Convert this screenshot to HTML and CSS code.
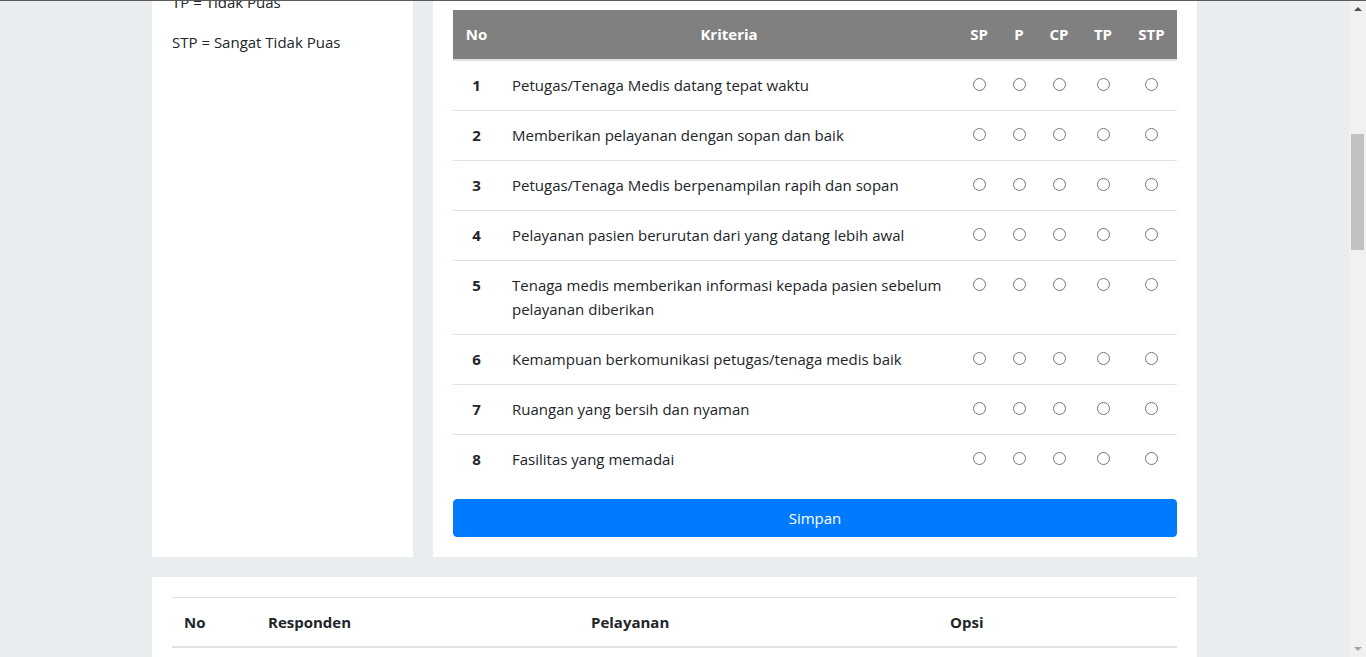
FILE: index.html
```html
<!DOCTYPE html>
<html lang="id">
<head>
<meta charset="utf-8">
<title>Kuesioner Kepuasan Pelayanan</title>
<link rel="stylesheet" href="styles.css">
</head>
<body>
<div class="topline"></div>
<main class="page">
  <div class="row">
    <aside class="card legend">
      <p>SP = Sangat Puas</p>
      <p>P = Puas</p>
      <p>CP = Cukup Puas</p>
      <p>TP = Tidak Puas</p>
      <p>STP = Sangat Tidak Puas</p>
    </aside>
    <section class="card survey">
      <div class="form-head">
        <h4>Kuesioner Kepuasan Pelayanan</h4>
        <p>Silakan pilih salah satu jawaban pada setiap kriteria.</p>
      </div>
      <form>
        <table class="tbl survey-tbl">
          <colgroup>
            <col class="c-no"><col class="c-krit"><col class="c-sp"><col class="c-p"><col class="c-cp"><col class="c-tp"><col class="c-stp">
          </colgroup>
          <thead>
            <tr><th>No</th><th>Kriteria</th><th>SP</th><th>P</th><th>CP</th><th>TP</th><th>STP</th></tr>
          </thead>
          <tbody>
            <tr><td class="no">1</td><td class="krit">Petugas/Tenaga Medis datang tepat waktu</td><td class="opt"><input type="radio" name="q1"></td><td class="opt"><input type="radio" name="q1"></td><td class="opt"><input type="radio" name="q1"></td><td class="opt"><input type="radio" name="q1"></td><td class="opt"><input type="radio" name="q1"></td></tr>
            <tr><td class="no">2</td><td class="krit">Memberikan pelayanan dengan sopan dan baik</td><td class="opt"><input type="radio" name="q2"></td><td class="opt"><input type="radio" name="q2"></td><td class="opt"><input type="radio" name="q2"></td><td class="opt"><input type="radio" name="q2"></td><td class="opt"><input type="radio" name="q2"></td></tr>
            <tr><td class="no">3</td><td class="krit">Petugas/Tenaga Medis berpenampilan rapih dan sopan</td><td class="opt"><input type="radio" name="q3"></td><td class="opt"><input type="radio" name="q3"></td><td class="opt"><input type="radio" name="q3"></td><td class="opt"><input type="radio" name="q3"></td><td class="opt"><input type="radio" name="q3"></td></tr>
            <tr><td class="no">4</td><td class="krit">Pelayanan pasien berurutan dari yang datang lebih awal</td><td class="opt"><input type="radio" name="q4"></td><td class="opt"><input type="radio" name="q4"></td><td class="opt"><input type="radio" name="q4"></td><td class="opt"><input type="radio" name="q4"></td><td class="opt"><input type="radio" name="q4"></td></tr>
            <tr><td class="no">5</td><td class="krit">Tenaga medis memberikan informasi kepada pasien sebelum pelayanan diberikan</td><td class="opt"><input type="radio" name="q5"></td><td class="opt"><input type="radio" name="q5"></td><td class="opt"><input type="radio" name="q5"></td><td class="opt"><input type="radio" name="q5"></td><td class="opt"><input type="radio" name="q5"></td></tr>
            <tr><td class="no">6</td><td class="krit">Kemampuan berkomunikasi petugas/tenaga medis baik</td><td class="opt"><input type="radio" name="q6"></td><td class="opt"><input type="radio" name="q6"></td><td class="opt"><input type="radio" name="q6"></td><td class="opt"><input type="radio" name="q6"></td><td class="opt"><input type="radio" name="q6"></td></tr>
            <tr><td class="no">7</td><td class="krit">Ruangan yang bersih dan nyaman</td><td class="opt"><input type="radio" name="q7"></td><td class="opt"><input type="radio" name="q7"></td><td class="opt"><input type="radio" name="q7"></td><td class="opt"><input type="radio" name="q7"></td><td class="opt"><input type="radio" name="q7"></td></tr>
            <tr><td class="no">8</td><td class="krit">Fasilitas yang memadai</td><td class="opt"><input type="radio" name="q8"></td><td class="opt"><input type="radio" name="q8"></td><td class="opt"><input type="radio" name="q8"></td><td class="opt"><input type="radio" name="q8"></td><td class="opt"><input type="radio" name="q8"></td></tr>
          </tbody>
        </table>
        <button type="button" class="btn-save">Simpan</button>
      </form>
    </section>
  </div>
  <section class="card results">
    <table class="tbl res-tbl">
      <colgroup><col class="r-no"><col class="r-resp"><col class="r-pel"><col class="r-opsi"></colgroup>
      <thead>
        <tr><th>No</th><th>Responden</th><th>Pelayanan</th><th>Opsi</th></tr>
      </thead>
    </table>
  </section>
</main>
<div class="scrollbar">
  <div class="sb-up"></div>
  <div class="sb-thumb"></div>
  <div class="sb-down"></div>
</div>
</body>
</html>
```
FILE: styles.css
```css
* { box-sizing: border-box; }
html, body { margin: 0; padding: 0; }
html { overflow: hidden; }
body {
  background: #eaedef;
  font-family: "Open Sans", "Noto Sans", "Liberation Sans", sans-serif;
  font-size: 15px;
  line-height: 24px;
  color: #212529;
  padding-right: 17px;
  height: 657px;
  overflow: hidden;
}
.topline {
  position: fixed; top: 0; left: 0; right: 0; height: 1px;
  background: #5a5a5a; z-index: 5;
}
.page {
  width: 1045px;
  margin: -150px auto 0;
  display: flex;
  flex-direction: column;
  gap: 20px;
}
.row {
  display: grid;
  grid-template-columns: 261px 764px;
  gap: 20px;
}
.card {
  background: #fff;
  padding: 20px;
}
.legend p { margin: 0 0 16px; }
.form-head { height: 140px; }
.form-head h4 { margin: 0 0 10px; font-size: 22px; line-height: 30px; font-weight: 500; }
.form-head p { margin: 0; }

.tbl {
  width: 100%;
  border-collapse: separate;
  border-spacing: 0;
  table-layout: fixed;
}
.survey-tbl { margin-bottom: 15px; }
.c-no { width: 47px; }
.c-sp { width: 42px; }
.c-p { width: 38px; }
.c-cp { width: 42px; }
.c-tp { width: 46px; }
.c-stp { width: 51px; }
.survey-tbl th {
  background: #808080;
  color: #fff;
  font-weight: 700;
  text-align: center;
  padding: 12px 0 13px;
  border-bottom: 2px solid #dee2e6;
  white-space: nowrap;
}
.survey-tbl td {
  padding: 12px 12px 13px;
  border-top: 1px solid #dee2e6;
  vertical-align: top;
}
.survey-tbl tbody tr:first-child td { border-top: 0; }
.survey-tbl td.no { text-align: center; font-weight: 700; padding-left: 0; padding-right: 0; }
.survey-tbl td.opt { text-align: center; padding-left: 0; padding-right: 0; }
.survey-tbl input[type=radio] {
  margin: 5px 0 0;
  width: 13px; height: 13px;
  vertical-align: top;
}
.btn-save {
  display: block;
  width: 100%;
  height: 38px;
  border: 1px solid #007bff;
  border-radius: 4px;
  background: #007bff;
  color: #fff;
  font: inherit;
  line-height: 24px;
  padding: 6px 12px;
}

.r-no { width: 84px; }
.r-resp { width: 323px; }
.r-pel { width: 359px; }
.res-tbl th {
  text-align: left;
  font-weight: 700;
  padding: 12px;
  border-top: 1px solid #dee2e6;
  border-bottom: 2px solid #dee2e6;
  color: #212529;
}

.scrollbar {
  position: fixed; top: 0; right: 0; bottom: 0; width: 17px;
  background: #f1f1f1;
}
.sb-up, .sb-down {
  position: absolute; left: 5px; width: 0; height: 0;
  border-left: 4px solid transparent; border-right: 4px solid transparent;
}
.sb-up { top: 7px; border-bottom: 4px solid #505050; }
.sb-down { bottom: 6px; border-top: 4px solid #a3a3a3; }
.sb-thumb {
  position: absolute; left: 2px; width: 13px; top: 134px; height: 116px;
  background: #c1c1c1;
}
```
